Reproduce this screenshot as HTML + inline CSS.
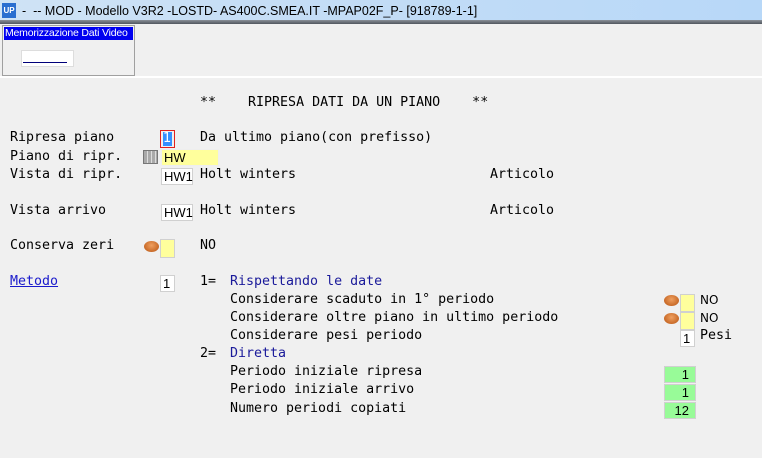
<!DOCTYPE html>
<html><head><meta charset="utf-8"><style>
*{margin:0;padding:0;box-sizing:border-box}
body{width:762px;height:458px;background:#f0f0f0;position:relative;overflow:hidden;font-family:"DejaVu Sans Mono","Liberation Mono",monospace;font-size:13.3px;color:#000}
.t{position:absolute;line-height:16px;white-space:pre;margin-top:1px}
.b{color:#1a1a9a}
.f{position:absolute;height:17px;border:1px solid #d0d0d0;background:#fff;line-height:15px;font-family:"Liberation Sans","DejaVu Sans",sans-serif;font-size:13px;padding-left:2px}
.y{background:#ffff9c}
.g{background:#98fb98;text-align:right;padding-right:6px}
.coin{position:absolute;width:15px;height:11px;border-radius:50%;background:radial-gradient(ellipse at 50% 40%,#f0a060,#c86a28 70%,#8a4010);}
</style></head><body>
<div style="position:absolute;left:0;top:0;width:762px;height:21px;background:linear-gradient(90deg,#cfe3f5,#c4ddf6 40%,#b8d8f8)"></div>
<div style="position:absolute;left:2px;top:3px;width:14px;height:15px;background:#2a6fd0;color:#fff;font:bold 8px 'Liberation Sans',sans-serif;line-height:15px;text-align:center">UP</div>
<div class="t" style="left:22px;top:2px;font-family:'Liberation Sans',sans-serif;font-size:12.5px">-  -- MOD - Modello V3R2 -LOSTD- AS400C.SMEA.IT -MPAP02F_P- [918789-1-1]</div>
<div style="position:absolute;left:0;top:20px;width:762px;height:4px;background:linear-gradient(#8a9098,#50565e)"></div>
<div style="position:absolute;left:0;top:24px;width:762px;height:52px;background:#f0f0f0"></div>
<div style="position:absolute;left:2px;top:25px;width:133px;height:51px;border:1px solid #a0a0a0;background:#f0f0f0"></div>
<div style="position:absolute;left:4px;top:27px;width:129px;height:13px;background:#0000f0;color:#fff;font:10.5px 'Liberation Sans',sans-serif;line-height:13px;padding-left:1px;white-space:nowrap;overflow:hidden;letter-spacing:-0.2px">Memorizzazione Dati Video</div>
<div style="position:absolute;left:21px;top:50px;width:53px;height:17px;background:#fff;border:1px solid #ddd"></div>
<div style="position:absolute;left:23px;top:62px;width:44px;height:1px;background:#00007a"></div>
<div style="position:absolute;left:0;top:76px;width:762px;height:2px;background:#fff"></div>

<div class="t" style="left:200px;top:94px">**    RIPRESA DATI DA UN PIANO    **</div>

<div class="t" style="left:10px;top:129px">Ripresa piano</div>
<div style="position:absolute;left:160px;top:130px;width:15px;height:18px;border:1px solid #e02020"></div>
<div style="position:absolute;left:163px;top:132px;width:9px;height:14px;background:#3390ff;color:#fff;font:13px 'DejaVu Sans',sans-serif;line-height:14px">1</div>
<div class="t" style="left:200px;top:129px">Da ultimo piano(con prefisso)</div>

<div class="t" style="left:10px;top:148px">Piano di ripr.</div>
<div style="position:absolute;left:143px;top:150px;width:15px;height:14px;border:1px solid #777;background:repeating-linear-gradient(90deg,#aaa 0 3px,#ddd 3px 4px),#ccc"></div>
<div class="f y" style="left:161px;top:149px;width:58px;border-color:#eee">HW</div>

<div class="t" style="left:10px;top:166px">Vista di ripr.</div>
<div class="f" style="left:161px;top:168px;width:32px">HW1</div>
<div class="t" style="left:200px;top:166px">Holt winters</div>
<div class="t" style="left:490px;top:166px">Articolo</div>

<div class="t" style="left:10px;top:202px">Vista arrivo</div>
<div class="f" style="left:161px;top:204px;width:32px">HW1</div>
<div class="t" style="left:200px;top:202px">Holt winters</div>
<div class="t" style="left:490px;top:202px">Articolo</div>

<div class="t" style="left:10px;top:237px">Conserva zeri</div>
<div class="coin" style="left:144px;top:241px"></div>
<div class="f y" style="left:160px;top:239px;width:15px;height:19px"></div>
<div class="t" style="left:200px;top:237px">NO</div>

<div class="t" style="left:10px;top:273px;color:#1a1acc;text-decoration:underline">Metodo</div>
<div class="f" style="left:160px;top:275px;width:15px">1</div>
<div class="t" style="left:200px;top:273px">1=</div>
<div class="t b" style="left:230px;top:273px">Rispettando le date</div>
<div class="t" style="left:230px;top:291px">Considerare scaduto in 1° periodo</div>
<div class="t" style="left:230px;top:309px">Considerare oltre piano in ultimo periodo</div>
<div class="t" style="left:230px;top:327px">Considerare pesi periodo</div>
<div class="t" style="left:200px;top:345px">2=</div>
<div class="t b" style="left:230px;top:345px">Diretta</div>
<div class="t" style="left:230px;top:363px">Periodo iniziale ripresa</div>
<div class="t" style="left:230px;top:381px">Periodo iniziale arrivo</div>
<div class="t" style="left:230px;top:400px">Numero periodi copiati</div>

<div class="coin" style="left:664px;top:295px"></div>
<div class="f y" style="left:680px;top:294px;width:15px;height:18px"></div>
<div class="t" style="left:700px;top:291px;font-family:'DejaVu Sans',sans-serif;font-size:12px">NO</div>
<div class="coin" style="left:664px;top:313px"></div>
<div class="f y" style="left:680px;top:312px;width:15px;height:18px"></div>
<div class="t" style="left:700px;top:309px;font-family:'DejaVu Sans',sans-serif;font-size:12px">NO</div>
<div class="f" style="left:680px;top:330px;width:15px">1</div>
<div class="t" style="left:700px;top:327px">Pesi</div>

<div class="f g" style="left:664px;top:366px;width:32px">1</div>
<div class="f g" style="left:664px;top:384px;width:32px">1</div>
<div class="f g" style="left:664px;top:402px;width:32px">12</div>
</body></html>
